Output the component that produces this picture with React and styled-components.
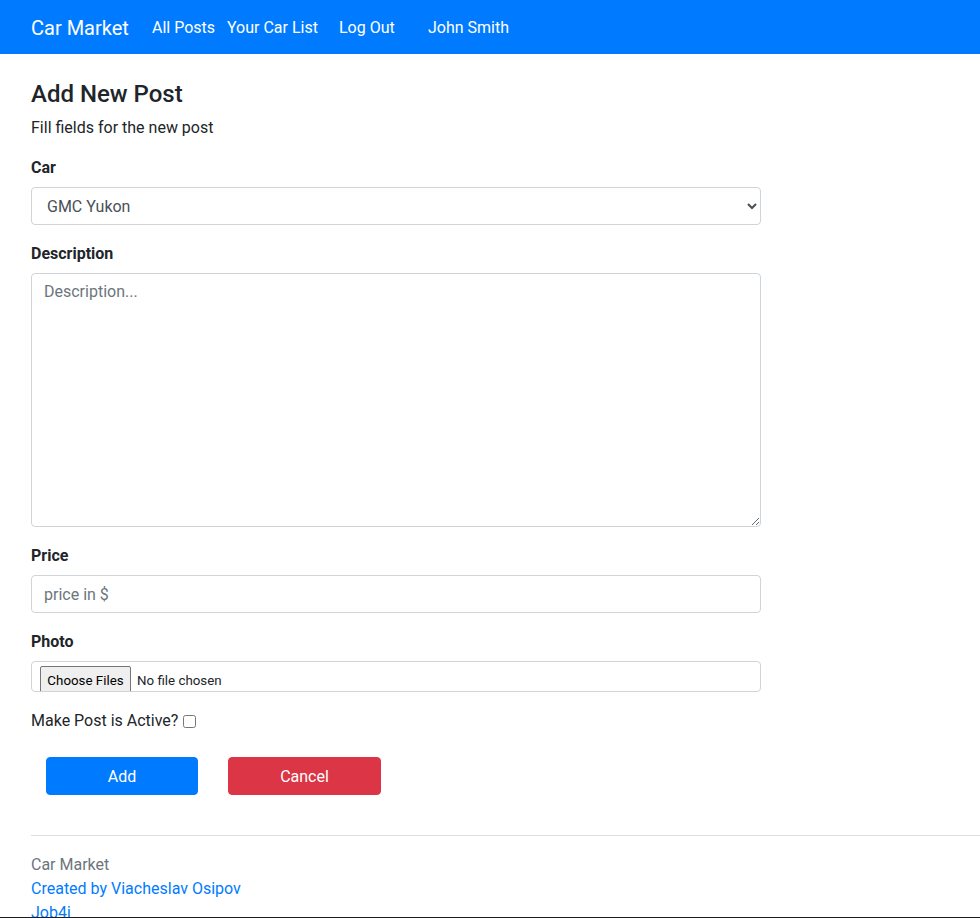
import React from "react";
import styled, { createGlobalStyle } from "styled-components";

const GlobalStyle = createGlobalStyle`
  html, body { margin: 0; padding: 0; }
  body {
    font-family: Roboto, "Liberation Sans", Arial, sans-serif;
    font-size: 16px;
    line-height: 1.5;
    color: #212529;
    background: #fff;
  }
  *, *::before, *::after { box-sizing: border-box; }
`;

const Page = styled.div`
  height: 918px;
  overflow: hidden;
  border-bottom: 1px solid #1e1e1e;
  display: flex;
  flex-direction: column;
`;

const Navbar = styled.nav`
  flex: none;
  height: 54px;
  background: #007bff;
  display: flex;
  align-items: center;
  padding: 1px 0 0 31px;
`;

const Brand = styled.a`
  display: block;
  width: 113px;
  font-size: 20px;
  line-height: 30px;
  color: #fff;
  text-decoration: none;
`;

const NavLink = styled.a`
  display: block;
  width: ${(p) => p.$w}px;
  padding-left: 8px;
  font-size: 16px;
  line-height: 24px;
  color: #fff;
  text-decoration: none;
  white-space: nowrap;
`;

const Main = styled.main`
  flex: 1;
  padding: 26px 0 0 31px;
`;

const Title = styled.h4`
  margin: 0 0 7px;
  font-size: 24px;
  font-weight: 500;
  line-height: 28px;
`;

const Lead = styled.p`
  margin: 0 0 15px;
  padding-top: 1px;
`;

const Form = styled.form`
  width: 730px;
`;

const Group = styled.div`
  margin-bottom: ${(p) => p.$mb ?? 16}px;
`;

const Label = styled.label`
  display: block;
  font-weight: 700;
  padding-top: 1px;
  margin-bottom: 7px;
`;

const fieldBase = `
  display: block;
  width: 100%;
  border: 1px solid #ced4da;
  border-radius: 4px;
  font-family: Roboto, "Liberation Sans", Arial, sans-serif;
  font-size: 16px;
  line-height: 24px;
  color: #495057;
  background: #fff;
  padding: 6px 12px;
  outline: none;
  &::placeholder { color: #6c757d; opacity: 1; }
`;

const Select = styled.select`
  ${fieldBase}
  height: 38px;
  padding-left: 11px;
`;

const TextArea = styled.textarea`
  ${fieldBase}
  height: 254px;
  resize: vertical;
`;

const Input = styled.input`
  ${fieldBase}
  height: 38px;
`;

const FileBox = styled.div`
  height: 31px;
  border: 1px solid #ced4da;
  border-radius: 4px;
  padding: 4px 0 0 8px;
  overflow: hidden;
`;

const FileInput = styled.input`
  font-family: Roboto, "Liberation Sans", Arial, sans-serif;
  font-size: 13.33px;
  color: #212529;
  &::file-selector-button {
    font-family: Roboto, "Liberation Sans", Arial, sans-serif;
    font-size: 13.33px;
    height: 28px;
    width: 91px;
    padding: 0 6px;
    margin-right: 6px;
    border: 1px solid #767676;
    border-radius: 2px;
    background: #efefef;
    color: #000;
  }
`;

const CheckLabel = styled.label`
  display: inline-flex;
  align-items: center;
  padding-top: 1px;
`;

const Check = styled.input`
  width: 13px;
  height: 13px;
  margin: 0 0 0 5px;
`;

const Buttons = styled.div`
  display: flex;
  gap: 30px;
  padding-left: 15px;
`;

const Button = styled.button`
  width: ${(p) => p.$w}px;
  height: 38px;
  padding: 1px 0 0;
  border: 1px solid ${(p) => p.$bg};
  border-radius: 4px;
  background: ${(p) => p.$bg};
  color: #fff;
  font-family: Roboto, "Liberation Sans", Arial, sans-serif;
  font-size: 16px;
  line-height: 24px;
  cursor: pointer;
`;

const Rule = styled.hr`
  margin: 40px 0 17px;
  border: 0;
  border-top: 1px solid #dedede;
`;

const Footer = styled.footer`
  display: flex;
  flex-direction: column;
`;

const FooterText = styled.span`
  color: #6c757d;
`;

const FooterLink = styled.a`
  color: #007bff;
  text-decoration: none;
`;

export default function App() {
  return (
    <>
      <GlobalStyle />
      <Page>
        <Navbar>
          <Brand href="#">Car Market</Brand>
          <NavLink href="#" $w={75}>All Posts</NavLink>
          <NavLink href="#" $w={112}>Your Car List</NavLink>
          <NavLink href="#" $w={89}>Log Out</NavLink>
          <NavLink href="#" $w={120}>John Smith</NavLink>
        </Navbar>
        <Main>
          <Title>Add New Post</Title>
          <Lead>Fill fields for the new post</Lead>
          <Form onSubmit={(e) => e.preventDefault()}>
            <Group>
              <Label htmlFor="car">Car</Label>
              <Select id="car" defaultValue="gmc">
                <option value="gmc">GMC Yukon</option>
              </Select>
            </Group>
            <Group>
              <Label htmlFor="desc">Description</Label>
              <TextArea id="desc" placeholder="Description..." />
            </Group>
            <Group>
              <Label htmlFor="price">Price</Label>
              <Input id="price" type="text" placeholder="price in $" />
            </Group>
            <Group>
              <Label htmlFor="photo">Photo</Label>
              <FileBox>
                <FileInput id="photo" type="file" multiple />
              </FileBox>
            </Group>
            <Group $mb={24}>
              <CheckLabel>
                Make Post is Active?
                <Check type="checkbox" />
              </CheckLabel>
            </Group>
            <Buttons>
              <Button type="submit" $bg="#007bff" $w={152}>Add</Button>
              <Button type="button" $bg="#dc3545" $w={153}>Cancel</Button>
            </Buttons>
          </Form>
          <Rule />
          <Footer>
            <FooterText>Car Market</FooterText>
            <FooterLink href="#">Created by Viacheslav Osipov</FooterLink>
            <FooterLink href="#">Job4j</FooterLink>
          </Footer>
        </Main>
      </Page>
    </>
  );
}
